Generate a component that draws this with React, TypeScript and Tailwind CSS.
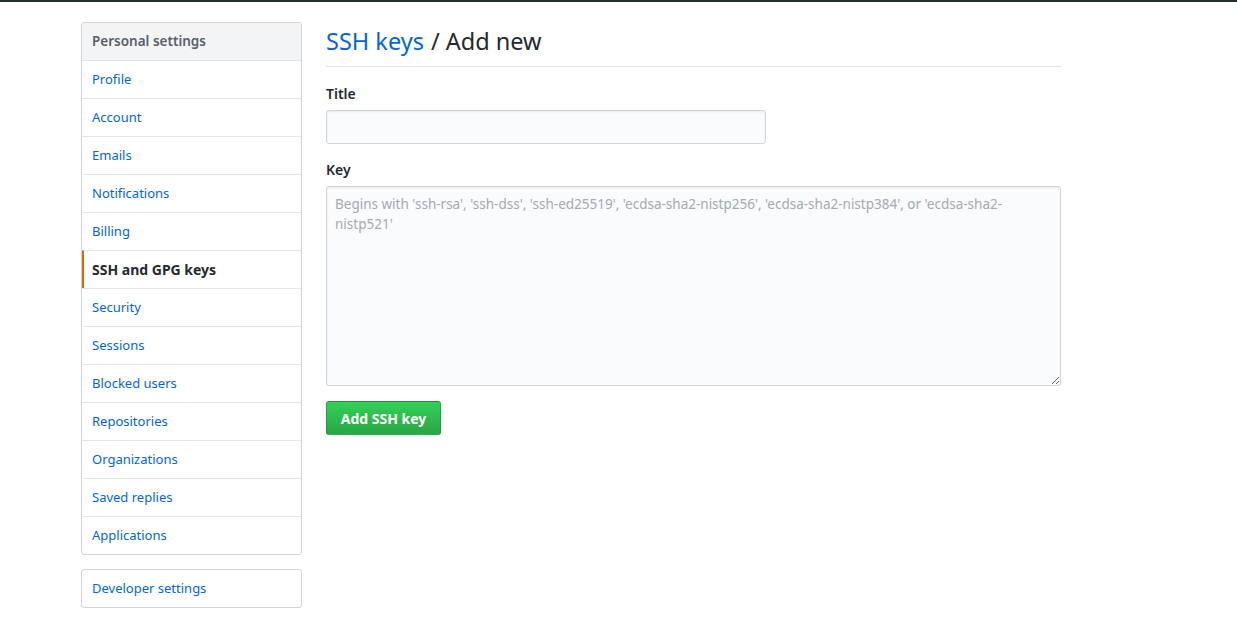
const items = [
  'Profile',
  'Account',
  'Emails',
  'Notifications',
  'Billing',
  'SSH and GPG keys',
  'Security',
  'Sessions',
  'Blocked users',
  'Repositories',
  'Organizations',
  'Saved replies',
  'Applications',
]

const font = { fontFamily: '"Noto Sans", "Open Sans", Arial, sans-serif' }

function SideNav() {
  return (
    <nav className="w-[221px] shrink-0">
      <div className="overflow-hidden rounded-[3px] border border-[#d1d5da]">
        <div className="flex h-[37px] items-center bg-[#f3f4f6] px-[10px] text-[13.5px] font-semibold text-[#586069]">
          Personal settings
        </div>
        {items.map((label) => {
          const selected = label === 'SSH and GPG keys'
          return (
            <a
              key={label}
              href="#"
              className={
                selected
                  ? 'flex h-[38px] items-center border-t border-l-2 border-t-[#e1e4e8] border-l-[#e36209] px-[8px] text-[14px] font-bold text-[#24292e]'
                  : 'flex h-[38px] items-center border-t border-[#e1e4e8] px-[10px] text-[13px] text-[#0366d6]'
              }
            >
              {label}
            </a>
          )
        })}
      </div>
      <div className="mt-[14px] rounded-[3px] border border-[#d1d5da]">
        <a href="#" className="flex h-[37px] items-center px-[10px] text-[13px] text-[#0366d6]">
          Developer settings
        </a>
      </div>
    </nav>
  )
}

export default function App() {
  return (
    <div className="min-h-[643px] bg-white text-[#24292e]" style={font}>
      <div className="h-[2px] bg-[#24292e]" />
      <div className="ml-[81px] mt-[20px] flex w-[980px] gap-[24px]">
        <SideNav />
        <main className="w-[735px]">
          <h2 className="flex h-[45px] items-center border-b border-[#e1e4e8] pb-[4px] text-[23.5px] font-normal">
            <a href="#" className="text-[#0366d6]">SSH keys</a>
            <span className="ml-[7px]">/ Add new</span>
          </h2>
          <form className="pt-[16px]">
            <label className="block text-[14px] font-semibold">Title</label>
            <input
              type="text"
              className="mt-[6px] block h-[34px] w-[440px] rounded-[3px] border border-[#d1d5da] bg-[#fafbfc] px-2 text-[13px] shadow-[inset_0_1px_2px_rgba(27,31,35,0.075)] outline-none"
            />
            <label className="mt-[15px] block text-[14px] font-semibold">Key</label>
            <textarea
              placeholder="Begins with 'ssh-rsa', 'ssh-dss', 'ssh-ed25519', 'ecdsa-sha2-nistp256', 'ecdsa-sha2-nistp384', or 'ecdsa-sha2-nistp521'"
              className="mt-[6px] block h-[200px] w-[735px] resize-y rounded-[3px] border border-[#d1d5da] bg-[#fafbfc] px-[8px] py-[7px] text-[13.5px] leading-[20px] shadow-[inset_0_1px_2px_rgba(27,31,35,0.075)] outline-none placeholder:text-[#a3aab1]"
            />
            <button
              type="button"
              className="mt-[15px] flex h-[34px] w-[115px] items-center justify-center rounded-[3px] border border-[rgba(27,31,35,0.2)] bg-gradient-to-b from-[#34d058] to-[#28a745] text-[14px] font-bold text-white"
            >
              Add SSH key
            </button>
          </form>
        </main>
      </div>
    </div>
  )
}
